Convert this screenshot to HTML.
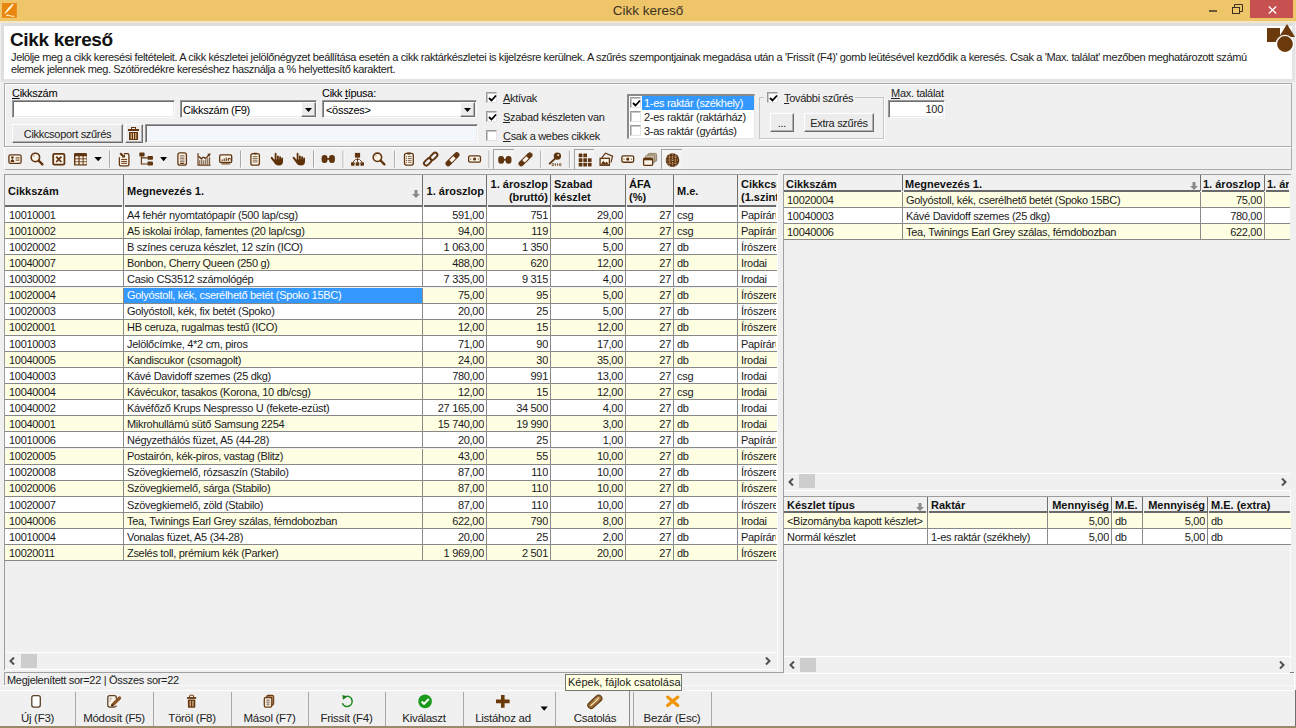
<!DOCTYPE html><html><head><meta charset="utf-8"><title>Cikk kereső</title><style>
*{box-sizing:border-box;margin:0;padding:0}
html,body{width:1296px;height:728px;overflow:hidden}
body{background:#f0f0f0;font-family:"Liberation Sans",sans-serif;font-size:11px;color:#000;position:relative;letter-spacing:-0.3px;line-height:1}
.a{position:absolute}
.t{position:absolute;white-space:nowrap}
.inp{position:absolute;background:#fff;border:1px solid #fbfbfb;border-top-color:#9a9a9a;border-left-color:#9a9a9a;box-shadow:inset 1px 1px 0 #6e6e6e,inset -1px -1px 0 #ececec}
.btn{position:absolute;background:#ececec;border:1px solid #fff;border-right-color:#6d6d6d;border-bottom-color:#6d6d6d;box-shadow:inset -1px -1px 0 #b0b0b0}
.cb{position:absolute;width:11px;height:11px;background:#fff;border:1px solid #9a9a9a;border-right-color:#e4e4e4;border-bottom-color:#e4e4e4;box-shadow:inset 1px 1px 0 #c8c8c8}
.cb svg{position:absolute;left:1px;top:1px}
.u{text-decoration:underline}
.ic{position:absolute}
.sep{position:absolute;width:1px;background:#a8a8a8;border-right:1px solid #fff;width:2px}
.hc{position:absolute;font-weight:bold;color:#111;letter-spacing:0}
.cell{position:absolute;white-space:nowrap;overflow:hidden;line-height:14px;margin-top:-2.3px}
</style></head><body>
<div class="a" style="left:0;top:0;width:1296px;height:21px;background:#efc56a"></div>
<div class="a" style="left:0;top:21px;width:1296px;height:2px;background:#f3e7c6"></div>
<svg class="a" style="left:2px;top:3px" width="15" height="15" viewBox="0 0 15 15"><rect width="14.8" height="14.8" fill="#e8860f"/><path d="M2.2 10.6 Q5 5.5 10.8 0.6 L11.6 1.4 Q8.6 6.4 3.2 10.8 Z" fill="#fff8d8"/><path d="M4.2 12.8 Q6 11.6 7.2 12.6 Q9 13.4 12.6 13.2" fill="none" stroke="#fff0c0" stroke-width="1.1"/></svg>
<div class="t" style="left:0;width:1296px;top:4px;text-align:center;font-size:13.5px;letter-spacing:0;color:#3c3220">Cikk kereső</div>
<div class="a" style="left:1209px;top:10px;width:8px;height:1.5px;background:#6a5a3a"></div>
<svg class="a" style="left:1232px;top:4px" width="11" height="10" viewBox="0 0 11 10"><rect x="0.5" y="3.5" width="7" height="6" fill="none" stroke="#3a3020"/><path d="M2.5 3.5 V0.5 H10.5 V7.5 H7.5" fill="none" stroke="#3a3020"/></svg>
<div class="a" style="left:1250px;top:0;width:43px;height:18px;background:#c75050"></div>
<svg class="a" style="left:1268px;top:6px" width="9" height="8" viewBox="0 0 9 8"><path d="M0.8 0.5 L8.2 7.5 M8.2 0.5 L0.8 7.5" stroke="#fff" stroke-width="1.4"/></svg>
<div class="a" style="left:1px;top:23px;width:1294px;height:59px;background:#fff;border:3px solid #e4e4e4;border-top-color:#dedede;border-left-color:#dedede"></div>
<div class="t" style="left:10px;top:30px;font-size:19px;font-weight:bold;letter-spacing:-0.35px;color:#111">Cikk kereső</div>
<div class="t" style="left:11px;top:52px;font-size:11px;color:#222;letter-spacing:-0.37px">Jelölje meg a cikk keresési feltételeit. A cikk készletei jelölőnégyzet beállítása esetén a cikk raktárkészletei is kijelzésre kerülnek. A szűrés szempontjainak megadása után a 'Frissít (F4)' gomb leütésével kezdődik a keresés. Csak a 'Max. találat' mezőben meghatározott számú</div>
<div class="t" style="left:11px;top:64px;font-size:11px;color:#222;letter-spacing:-0.37px">elemek jelennek meg. Szótöredékre kereséshez használja a % helyettesítő karaktert.</div>
<svg class="a" style="left:1264px;top:22px" width="32" height="30" viewBox="0 0 32 30"><rect x="3" y="6" width="13" height="14" fill="#6a3a0c"/><path d="M23 2 L31 15 L15 15 Z" fill="#6a3a0c"/><circle cx="21" cy="22" r="8.6" fill="#6a3a0c" stroke="#fff" stroke-width="1.4"/></svg>
<div class="a" style="left:4px;top:83px;width:1288px;height:64px;border:1px solid #ababab;box-shadow:1px 1px 0 #fff inset"></div>
<div class="t" style="left:12px;top:88px"><span class="u">C</span>ikkszám</div>
<div class="inp" style="left:12px;top:100px;width:163px;height:18px"></div>
<div class="inp" style="left:180px;top:100px;width:137px;height:18px"></div>
<div class="t" style="left:183px;top:105px">Cikkszám (F9)</div>
<div class="btn" style="left:301px;top:102px;width:15px;height:15px"></div>
<svg class="a" style="left:305px;top:108px" width="8" height="4"><path d="M0 0 H7 L3.5 4 Z" fill="#000"/></svg>
<div class="t" style="left:322px;top:88px">Cikk <span class="u">t</span>ípusa:</div>
<div class="inp" style="left:322px;top:100px;width:155px;height:18px"></div>
<div class="t" style="left:326px;top:105px">&lt;összes&gt;</div>
<div class="btn" style="left:460px;top:102px;width:15px;height:15px"></div>
<svg class="a" style="left:464px;top:108px" width="8" height="4"><path d="M0 0 H7 L3.5 4 Z" fill="#000"/></svg>
<div class="btn" style="left:12px;top:124px;width:111px;height:19px"></div>
<div class="t" style="left:12px;width:111px;text-align:center;top:129px;color:#222">Cikkcsoport szűrés</div>
<div class="btn" style="left:125px;top:124px;width:18px;height:19px"></div>
<svg class="a" style="left:128px;top:127px" width="11" height="13" viewBox="0 0 11 13"><rect x="3.5" y="0.5" width="4" height="2" fill="none" stroke="#603510"/><rect x="0" y="2" width="11" height="2" fill="#603510"/><path d="M1 5 H10 V13 H1 Z M3 6 V12 M5.5 6 V12 M8 6 V12" fill="#603510" stroke="#f0e0c0" stroke-width="0"/><path d="M3.2 6 V12 M5.5 6 V12 M7.8 6 V12" stroke="#e8c898" stroke-width="1"/></svg>
<div class="inp" style="left:145px;top:124px;width:333px;height:19px;background:#f3f6fb"></div>
<div class="cb" style="left:486px;top:92px"><svg width="9" height="9" viewBox="0 0 9 9"><path d="M1 4 L3.5 6.5 L8 1.5" stroke="#000" stroke-width="1.8" fill="none"/></svg></div>
<div class="t" style="left:503px;top:93px;color:#222"><span class="u">A</span>ktívak</div>
<div class="cb" style="left:486px;top:111px"><svg width="9" height="9" viewBox="0 0 9 9"><path d="M1 4 L3.5 6.5 L8 1.5" stroke="#000" stroke-width="1.8" fill="none"/></svg></div>
<div class="t" style="left:503px;top:112px;color:#222"><span class="u">S</span>zabad készleten van</div>
<div class="cb" style="left:486px;top:130px"></div>
<div class="t" style="left:503px;top:131px;color:#222"><span class="u">C</span>sak a webes cikkek</div>
<div class="a" style="left:627px;top:94px;width:128px;height:45px;background:#fff;border:1px solid #9a9a9a;border-left:2px solid #8a8a8a;border-top:2px solid #8a8a8a;border-right-color:#e6e6e6;border-bottom-color:#e6e6e6"></div>
<div class="a" style="left:642px;top:96px;width:112px;height:14px;background:#3399ff"></div>
<div class="cb" style="left:630px;top:97px"><svg width="9" height="9" viewBox="0 0 9 9"><path d="M1 4 L3.5 6.5 L8 1.5" stroke="#000" stroke-width="1.8" fill="none"/></svg></div>
<div class="t" style="left:644px;top:98px;color:#fff">1-es raktár (székhely)</div>
<div class="cb" style="left:630px;top:111px"></div>
<div class="t" style="left:644px;top:112px;color:#222">2-es raktár (raktárház)</div>
<div class="cb" style="left:630px;top:125px"></div>
<div class="t" style="left:644px;top:126px;color:#222">3-as raktár (gyártás)</div>
<div class="a" style="left:759px;top:97px;width:125px;height:42px;border:1px solid #c6c6c6;box-shadow:1px 1px 0 #fff"></div>
<div class="a" style="left:764px;top:90px;width:91px;height:14px;background:#f0f0f0"></div>
<div class="cb" style="left:767px;top:92px"><svg width="9" height="9" viewBox="0 0 9 9"><path d="M1 4 L3.5 6.5 L8 1.5" stroke="#000" stroke-width="1.8" fill="none"/></svg></div>
<div class="t" style="left:784px;top:93px;color:#222"><span class="u">T</span>ovábbi szűrés</div>
<div class="btn" style="left:770px;top:113px;width:24px;height:19px"></div>
<div class="t" style="left:770px;width:24px;text-align:center;top:118px;color:#222">...</div>
<div class="btn" style="left:804px;top:113px;width:70px;height:19px"></div>
<div class="t" style="left:804px;width:70px;text-align:center;top:118px;color:#222">Extra szűrés</div>
<div class="t" style="left:891px;top:88px;color:#222"><span class="u">M</span>ax. találat</div>
<div class="inp" style="left:888px;top:100px;width:57px;height:18px"></div>
<div class="t" style="left:888px;width:55px;text-align:right;top:104px;color:#222">100</div>
<div class="a" style="left:4px;top:147px;width:1288px;height:23px;border-top:1px solid #fff;border-left:1px solid #fff;border-right:1px solid #ababab;border-bottom:1px solid #ababab"></div>
<div class="a" style="left:493.4px;top:149px;width:20.399999999999977px;height:20px;border-top:1px solid #a4a4a4;border-left:1px solid #a4a4a4;background:#f4f4f4"></div>
<div class="a" style="left:574.3px;top:149px;width:20.100000000000023px;height:20px;border-top:1px solid #a4a4a4;border-left:1px solid #a4a4a4;background:#f4f4f4"></div>
<div class="a" style="left:661.3px;top:149px;width:20.600000000000023px;height:20px;border-top:1px solid #a4a4a4;border-left:1px solid #a4a4a4;background:#f4f4f4"></div>
<svg class="ic" style="left:0;top:145px" width="700" height="30" viewBox="0 145 700 30"><rect x="109.0" y="150.6" width="1" height="17" fill="#a8a8a8"/><rect x="110.0" y="150.6" width="1" height="17" fill="#fafafa"/><rect x="240.0" y="150.6" width="1" height="17" fill="#a8a8a8"/><rect x="241.0" y="150.6" width="1" height="17" fill="#fafafa"/><rect x="313.0" y="150.6" width="1" height="17" fill="#a8a8a8"/><rect x="314.0" y="150.6" width="1" height="17" fill="#fafafa"/><rect x="342.5" y="150.6" width="1" height="17" fill="#a8a8a8"/><rect x="343.5" y="150.6" width="1" height="17" fill="#fafafa"/><rect x="394.1" y="150.6" width="1" height="17" fill="#a8a8a8"/><rect x="395.1" y="150.6" width="1" height="17" fill="#fafafa"/><rect x="488.5" y="150.6" width="1" height="17" fill="#a8a8a8"/><rect x="489.5" y="150.6" width="1" height="17" fill="#fafafa"/><rect x="540.2" y="150.6" width="1" height="17" fill="#a8a8a8"/><rect x="541.2" y="150.6" width="1" height="17" fill="#fafafa"/><rect x="568.9" y="150.6" width="1" height="17" fill="#a8a8a8"/><rect x="569.9" y="150.6" width="1" height="17" fill="#fafafa"/><rect x="8.9" y="154.9" width="12.2" height="8.4" rx="1.6" fill="#fdf6ea" stroke="#603510" stroke-width="1.3"/><circle cx="12.4" cy="157.6" r="1.3" fill="#603510"/><path d="M10.4 161.9 Q10.6 159.2 12.4 159.2 Q14.2 159.2 14.4 161.9 Z" fill="#603510"/><path d="M15.6 157.9 H19.6 M15.6 160.1 H19.6" stroke="#603510" stroke-width="1"/><circle cx="35.4" cy="157.4" r="4.2" fill="#fdf6ea" stroke="#603510" stroke-width="1.6"/><path d="M38.6 160.6 L42.4 164.4" stroke="#603510" stroke-width="2.4" stroke-linecap="round"/><circle cx="33.9" cy="155.9" r="0.7" fill="#9a8a7a"/><rect x="53.2" y="153.8" width="11.2" height="10.9" rx="1.2" fill="#fdf6ea" stroke="#603510" stroke-width="1.8"/><path d="M56.2 156.6 L61.4 162 M61.4 156.6 L56.2 162" stroke="#603510" stroke-width="1.8"/><rect x="74" y="153" width="13" height="12.6" rx="1.2" fill="#603510"/><rect x="75.4" y="156.3" width="3" height="2.1" fill="#fdf6ea"/><rect x="79.6" y="156.3" width="3" height="2.1" fill="#fdf6ea"/><rect x="83.6" y="156.3" width="3" height="2.1" fill="#fdf6ea"/><rect x="75.4" y="159.3" width="3" height="2.1" fill="#fdf6ea"/><rect x="79.6" y="159.3" width="3" height="2.1" fill="#fdf6ea"/><rect x="83.6" y="159.3" width="3" height="2.1" fill="#fdf6ea"/><rect x="75.4" y="162.2" width="3" height="2.1" fill="#fdf6ea"/><rect x="79.6" y="162.2" width="3" height="2.1" fill="#fdf6ea"/><rect x="83.6" y="162.2" width="3" height="2.1" fill="#fdf6ea"/><path d="M94.4 157 H101.9 L98.15 161.2 Z" fill="#000"/><path d="M123.8 153.6 H127.6 Q128.9 153.6 128.9 154.9 V164.5 Q128.9 165.8 127.6 165.8 H120.7 Q119.4 165.8 119.4 164.5 V157.3" fill="#fdf6ea" stroke="#603510" stroke-width="1.3"/><path d="M121.2 159.4 H127.1 M121.2 161.4 H127.1 M121.2 163.3 H127.1" stroke="#603510" stroke-width="1"/><path d="M120.2 153.2 L123.2 156.2" stroke="#603510" stroke-width="2.2"/><path d="M121.6 157.6 L125 157.6 L125 154.2 Z" fill="#603510"/><rect x="139.3" y="152.6" width="5.3" height="4" rx="1" fill="#603510"/><rect x="147.4" y="155.9" width="5.6" height="3.9" rx="1" fill="#603510"/><rect x="147.4" y="161.4" width="5.6" height="4.2" rx="1" fill="#603510"/><path d="M141.4 156.6 V164 H147.4 M141.4 157.9 H147.4" fill="none" stroke="#603510" stroke-width="1.1"/><path d="M160.1 157 H167.1 L163.6 161.2 Z" fill="#000"/><rect x="177.9" y="152.9" width="8.5" height="12.3" rx="2" fill="#fdf6ea" stroke="#603510" stroke-width="1.3"/><path d="M179.9 155.6 H184.5 M179.9 157.1 H184.5 M179.9 158.6 H184.5 M179.9 160.1 H184.5 M179.9 161.6 H184.5" stroke="#8a7262" stroke-width="0.9"/><path d="M180.6 163.4 H183.8" stroke="#603510" stroke-width="1.3" stroke-linecap="round"/><path d="M198 153 V165.2 H210.6" fill="none" stroke="#603510" stroke-width="1.1"/><path d="M199.8 165 V160.2 M201.8 165 V159.2 M203.8 165 V160.4 M205.8 165 V159.4 M207.8 165 V158.2 M209.6 165 V157.2" stroke="#603510" stroke-width="0.9"/><path d="M198.4 156.2 L201.2 158.6 L203.4 157.2 L205.6 158.4 L209 155" fill="none" stroke="#603510" stroke-width="1.4"/><path d="M210.6 153.2 L207.2 154 L209.8 156.6 Z" fill="#603510"/><rect x="219.7" y="154.9" width="12" height="7.6" rx="1.2" fill="#fdf6ea" stroke="#603510" stroke-width="1.3"/><path d="M222.2 161 V159.6 M224.2 161 V158.6 M226.2 161 V157.4" stroke="#603510" stroke-width="1.1"/><circle cx="229.2" cy="159.4" r="1.7" fill="#603510"/><circle cx="229.6" cy="159.9" r="1" fill="#fdf6ea"/><path d="M221.6 163.9 H229.8" stroke="#8a6a4a" stroke-width="1.4"/><rect x="250.9" y="153.6" width="8.5" height="11.6" rx="2" fill="#fdf6ea" stroke="#603510" stroke-width="1.3"/><rect x="253.20000000000002" y="152.7" width="4" height="1.9" rx="0.8" fill="#603510"/><path d="M252.60000000000002 156.6 H257.6 M252.60000000000002 158.4 H257.6 M252.60000000000002 160.2 H257.6 M252.60000000000002 162 H257.6" stroke="#7a5a40" stroke-width="0.9"/><g transform="translate(0 0)"><path d="M271.7 157.8 L274.6 161.6" stroke="#5e3008" stroke-width="2" stroke-linecap="round"/><path d="M275.6 153.7 V160.5 M277.9 156.3 V160.5 M280.1 157.1 V160.5 M282.1 158.3 V160.5" stroke="#5e3008" stroke-width="1.8" stroke-linecap="round"/><path d="M274.3 159.6 H283 V161.8 Q283 165.5 278.8 165.5 Q275.9 165.5 274.4 163.2 Z" fill="#5e3008"/></g><g transform="translate(22 0)"><path d="M271.7 157.8 L274.6 161.6" stroke="#5e3008" stroke-width="2" stroke-linecap="round"/><path d="M275.6 153.7 V160.5 M277.9 156.3 V160.5 M280.1 157.1 V160.5 M282.1 158.3 V160.5" stroke="#5e3008" stroke-width="1.8" stroke-linecap="round"/><path d="M274.3 159.6 H283 V161.8 Q283 165.5 278.8 165.5 Q275.9 165.5 274.4 163.2 Z" fill="#5e3008"/></g><rect x="321.6" y="155" width="5.9" height="7.9" rx="2.7" ry="3.2" fill="#603510"/><rect x="329.0" y="155" width="5.9" height="7.9" rx="2.7" ry="3.2" fill="#603510"/><rect x="327.1" y="158" width="2.4" height="1.8" fill="#603510"/><rect x="354.9" y="152.9" width="5.2" height="4.7" fill="#603510"/><rect x="351" y="162.2" width="3.6" height="3.5" rx="0.6" fill="#603510"/><rect x="355.7" y="162.2" width="3.6" height="3.5" rx="0.6" fill="#603510"/><rect x="360.4" y="162.2" width="3.6" height="3.5" rx="0.6" fill="#603510"/><path d="M357.5 157.5 V162.2 M352.8 162.2 L355.6 159.4 H359.4 L362.2 162.2" fill="none" stroke="#603510" stroke-width="0.9"/><circle cx="377.4" cy="157.3" r="4.2" fill="#fdf6ea" stroke="#603510" stroke-width="1.6"/><path d="M380.59999999999997 160.5 L384.4 164.3" stroke="#603510" stroke-width="2.4" stroke-linecap="round"/><circle cx="375.9" cy="155.8" r="0.7" fill="#9a8a7a"/><rect x="404.5" y="153.4" width="8.8" height="11.7" rx="2" fill="#fdf6ea" stroke="#603510" stroke-width="1.3"/><rect x="406.9" y="152.6" width="4" height="1.9" rx="0.8" fill="#603510"/><path d="M407.9 156.6 H411.6 M407.9 158.5 H411.6 M407.9 160.4 H411.6 M407.9 162.3 H411.6" stroke="#7a5a40" stroke-width="0.9"/><circle cx="406.4" cy="156.6" r="0.55" fill="#603510"/><circle cx="406.4" cy="158.5" r="0.55" fill="#603510"/><circle cx="406.4" cy="160.4" r="0.55" fill="#603510"/><circle cx="406.4" cy="162.3" r="0.55" fill="#603510"/><rect x="423.4" y="159.6" width="8.6" height="4.6" rx="2.3" transform="rotate(-45 427.7 161.9)" fill="none" stroke="#603510" stroke-width="1.9"/><rect x="429.4" y="154" width="8.6" height="4.6" rx="2.3" transform="rotate(-45 433.7 156.3)" fill="none" stroke="#603510" stroke-width="1.9"/><g transform="rotate(-45 452.5 159.2)"><rect x="443.7" y="156.5" width="17.6" height="5.4" rx="2.7" fill="#603510"/><rect x="449.7" y="157.5" width="5.6" height="3.4" fill="#fdf6ea"/></g><rect x="468.65" y="155.85" width="11.8" height="6.3" rx="1.4" fill="#fdf6ea" stroke="#603510" stroke-width="1.3"/><circle cx="474.55" cy="159.0" r="1.6" fill="#603510"/><circle cx="470.8" cy="159.0" r="0.6" fill="#603510"/><circle cx="478.3" cy="159.0" r="0.6" fill="#603510"/><rect x="498.2" y="155.9" width="5.9" height="7.9" rx="2.7" ry="3.2" fill="#603510"/><rect x="505.59999999999997" y="155.9" width="5.9" height="7.9" rx="2.7" ry="3.2" fill="#603510"/><rect x="503.7" y="158.9" width="2.4" height="1.8" fill="#603510"/><g transform="rotate(-45 525.5 159.4)"><rect x="516.7" y="156.70000000000002" width="17.6" height="5.4" rx="2.7" fill="#603510"/><rect x="522.7" y="157.70000000000002" width="5.6" height="3.4" fill="#fdf6ea"/></g><circle cx="557.4" cy="156.1" r="3.7" fill="#603510"/><circle cx="558.3" cy="155.2" r="0.9" fill="#fdf6ea"/><path d="M555 158.6 L549.6 163.6" stroke="#603510" stroke-width="1.9" stroke-linecap="round"/><ellipse cx="552.9" cy="164.6" rx="0.9" ry="1.2" fill="none" stroke="#603510" stroke-width="0.8"/><path d="M555.4 163.4 V165.8 M557.6 163.4 V165.8" stroke="#603510" stroke-width="0.9"/><ellipse cx="560.2" cy="164.6" rx="0.9" ry="1.2" fill="none" stroke="#603510" stroke-width="0.8"/><rect x="578.7" y="153.6" width="3.7" height="3.7" rx="0.4" fill="#603510"/><rect x="583.3" y="153.6" width="3.7" height="3.7" rx="0.4" fill="#603510"/><rect x="578.7" y="158.2" width="3.7" height="3.7" rx="0.4" fill="#603510"/><rect x="583.3" y="158.2" width="3.7" height="3.7" rx="0.4" fill="#603510"/><rect x="587.9" y="158.2" width="3.7" height="3.7" rx="0.4" fill="#603510"/><rect x="578.7" y="162.8" width="3.7" height="3.7" rx="0.4" fill="#603510"/><rect x="583.3" y="162.8" width="3.7" height="3.7" rx="0.4" fill="#603510"/><rect x="587.9" y="162.8" width="3.7" height="3.7" rx="0.4" fill="#603510"/><path d="M601.8 157.8 L605.4 153.2 L612.6 156.2 L611 162.4" fill="none" stroke="#603510" stroke-width="1.2"/><rect x="600.1" y="158.3" width="9.3" height="7" fill="#fdf6ea" stroke="#603510" stroke-width="1.3"/><path d="M600.6 164.8 L603.2 160.8 L605.2 163 L606.6 161.6 L609 164.8 Z" fill="#603510"/><rect x="621.85" y="155.95000000000002" width="11.8" height="6.3" rx="1.4" fill="#fdf6ea" stroke="#603510" stroke-width="1.3"/><circle cx="627.75" cy="159.10000000000002" r="1.6" fill="#603510"/><circle cx="624.0" cy="159.10000000000002" r="0.6" fill="#603510"/><circle cx="631.5" cy="159.10000000000002" r="0.6" fill="#603510"/><rect x="648" y="153.4" width="8.6" height="8" rx="1.2" fill="#b8a892" stroke="#8a7a62" stroke-width="0.9"/><rect x="645.7" y="155.2" width="8.6" height="8" rx="1.2" fill="#cfc2ac" stroke="#8a7a62" stroke-width="0.9"/><rect x="643.6" y="158.1" width="9" height="7.3" rx="1.2" fill="#fdf6ea" stroke="#603510" stroke-width="1.3"/><rect x="643.6" y="158.1" width="9" height="2.2" fill="#603510"/><circle cx="672.5" cy="160.1" r="6.8" fill="#603510"/><path d="M667.4 157.1 H677.6 M666.4 160.1 H678.6 M667.4 163.1 H677.6 M669.5 154.4 V165.8 M672.5 153.6 V166.6 M675.5 154.4 V165.8" stroke="#d8b890" stroke-width="0.8" stroke-dasharray="1.1 1"/></svg>
<div class="a" style="left:4px;top:174px;width:774px;height:496px;background:#f0f0f0;border-left:1px solid #9c9c9c;border-top:1px solid #9c9c9c"></div>
<div class="a" style="left:5px;top:175px;width:772px;height:31px;background:#f0f0f0"></div>
<div class="a" style="left:5px;top:205px;width:117px;height:2px;background:#6a6a6a"></div>
<div class="hc t" style="left:8px;top:185px;line-height:13px;width:116px;overflow:hidden">Cikkszám</div>
<div class="a" style="left:123px;top:175px;width:1px;height:32px;background:#6e6e6e"></div>
<div class="a" style="left:125px;top:205px;width:297px;height:2px;background:#6a6a6a"></div>
<div class="hc t" style="left:127px;top:185px;line-height:13px;width:296px;overflow:hidden">Megnevezés 1.</div>
<div class="a" style="left:422px;top:175px;width:1px;height:32px;background:#6e6e6e"></div>
<div class="a" style="left:424px;top:205px;width:62px;height:2px;background:#6a6a6a"></div>
<div class="hc t" style="left:423px;width:61px;text-align:right;top:185px;line-height:13px">1. ároszlop</div>
<div class="a" style="left:486px;top:175px;width:1px;height:32px;background:#6e6e6e"></div>
<div class="a" style="left:488px;top:205px;width:62px;height:2px;background:#6a6a6a"></div>
<div class="hc t" style="left:487px;width:61px;text-align:right;top:178px;line-height:13px">1. ároszlop<br>(bruttó)</div>
<div class="a" style="left:550px;top:175px;width:1px;height:32px;background:#6e6e6e"></div>
<div class="a" style="left:552px;top:205px;width:73px;height:2px;background:#6a6a6a"></div>
<div class="hc t" style="left:554px;top:178px;line-height:13px;width:72px;overflow:hidden">Szabad<br>készlet</div>
<div class="a" style="left:625px;top:175px;width:1px;height:32px;background:#6e6e6e"></div>
<div class="a" style="left:627px;top:205px;width:46px;height:2px;background:#6a6a6a"></div>
<div class="hc t" style="left:629px;top:178px;line-height:13px;width:45px;overflow:hidden">ÁFA<br>(%)</div>
<div class="a" style="left:673px;top:175px;width:1px;height:32px;background:#6e6e6e"></div>
<div class="a" style="left:675px;top:205px;width:62px;height:2px;background:#6a6a6a"></div>
<div class="hc t" style="left:677px;top:185px;line-height:13px;width:61px;overflow:hidden">M.e.</div>
<div class="a" style="left:737px;top:175px;width:1px;height:32px;background:#6e6e6e"></div>
<div class="a" style="left:739px;top:205px;width:37px;height:2px;background:#6a6a6a"></div>
<div class="hc t" style="left:741px;top:178px;line-height:13px;width:36px;overflow:hidden">Cikkcso<br>(1.szint</div>
<svg class="ic" style="left:412px;top:190px" width="8" height="8" viewBox="0 0 8 8"><path d="M2.5 0H5.5V4H8L4 8L0 4H2.5Z" fill="#8a8a8a"/></svg>
<div class="a" style="left:5px;top:207.0px;width:772px;height:16px;background:#ffffff;border-bottom:1px solid #888"></div>
<div class="cell" style="left:9px;width:114px;top:210.0px;color:#1a1a1a">10010001</div>
<div class="a" style="left:123px;top:207.0px;width:1px;height:16px;background:#8a8a8a"></div>
<div class="cell" style="left:127px;width:295px;top:210.0px;color:#1a1a1a">A4 fehér nyomtatópapír (500 lap/csg)</div>
<div class="a" style="left:422px;top:207.0px;width:1px;height:16px;background:#8a8a8a"></div>
<div class="cell" style="left:423px;width:61px;text-align:right;top:210.0px;color:#1a1a1a">591,00</div>
<div class="a" style="left:486px;top:207.0px;width:1px;height:16px;background:#8a8a8a"></div>
<div class="cell" style="left:487px;width:61px;text-align:right;top:210.0px;color:#1a1a1a">751</div>
<div class="a" style="left:550px;top:207.0px;width:1px;height:16px;background:#8a8a8a"></div>
<div class="cell" style="left:551px;width:72px;text-align:right;top:210.0px;color:#1a1a1a">29,00</div>
<div class="a" style="left:625px;top:207.0px;width:1px;height:16px;background:#8a8a8a"></div>
<div class="cell" style="left:626px;width:45px;text-align:right;top:210.0px;color:#1a1a1a">27</div>
<div class="a" style="left:673px;top:207.0px;width:1px;height:16px;background:#8a8a8a"></div>
<div class="cell" style="left:677px;width:60px;top:210.0px;color:#1a1a1a">csg</div>
<div class="a" style="left:737px;top:207.0px;width:1px;height:16px;background:#8a8a8a"></div>
<div class="cell" style="left:741px;width:35px;top:210.0px;color:#1a1a1a">Papíráru</div>
<div class="a" style="left:5px;top:223.1px;width:772px;height:16px;background:#fefee2;border-bottom:1px solid #888"></div>
<div class="cell" style="left:9px;width:114px;top:226.1px;color:#1a1a1a">10010002</div>
<div class="a" style="left:123px;top:223.1px;width:1px;height:16px;background:#8a8a8a"></div>
<div class="cell" style="left:127px;width:295px;top:226.1px;color:#1a1a1a">A5 iskolai írólap, famentes (20 lap/csg)</div>
<div class="a" style="left:422px;top:223.1px;width:1px;height:16px;background:#8a8a8a"></div>
<div class="cell" style="left:423px;width:61px;text-align:right;top:226.1px;color:#1a1a1a">94,00</div>
<div class="a" style="left:486px;top:223.1px;width:1px;height:16px;background:#8a8a8a"></div>
<div class="cell" style="left:487px;width:61px;text-align:right;top:226.1px;color:#1a1a1a">119</div>
<div class="a" style="left:550px;top:223.1px;width:1px;height:16px;background:#8a8a8a"></div>
<div class="cell" style="left:551px;width:72px;text-align:right;top:226.1px;color:#1a1a1a">4,00</div>
<div class="a" style="left:625px;top:223.1px;width:1px;height:16px;background:#8a8a8a"></div>
<div class="cell" style="left:626px;width:45px;text-align:right;top:226.1px;color:#1a1a1a">27</div>
<div class="a" style="left:673px;top:223.1px;width:1px;height:16px;background:#8a8a8a"></div>
<div class="cell" style="left:677px;width:60px;top:226.1px;color:#1a1a1a">csg</div>
<div class="a" style="left:737px;top:223.1px;width:1px;height:16px;background:#8a8a8a"></div>
<div class="cell" style="left:741px;width:35px;top:226.1px;color:#1a1a1a">Papíráru</div>
<div class="a" style="left:5px;top:239.2px;width:772px;height:16px;background:#ffffff;border-bottom:1px solid #888"></div>
<div class="cell" style="left:9px;width:114px;top:242.2px;color:#1a1a1a">10020002</div>
<div class="a" style="left:123px;top:239.2px;width:1px;height:16px;background:#8a8a8a"></div>
<div class="cell" style="left:127px;width:295px;top:242.2px;color:#1a1a1a">B színes ceruza készlet, 12 szín (ICO)</div>
<div class="a" style="left:422px;top:239.2px;width:1px;height:16px;background:#8a8a8a"></div>
<div class="cell" style="left:423px;width:61px;text-align:right;top:242.2px;color:#1a1a1a">1 063,00</div>
<div class="a" style="left:486px;top:239.2px;width:1px;height:16px;background:#8a8a8a"></div>
<div class="cell" style="left:487px;width:61px;text-align:right;top:242.2px;color:#1a1a1a">1 350</div>
<div class="a" style="left:550px;top:239.2px;width:1px;height:16px;background:#8a8a8a"></div>
<div class="cell" style="left:551px;width:72px;text-align:right;top:242.2px;color:#1a1a1a">5,00</div>
<div class="a" style="left:625px;top:239.2px;width:1px;height:16px;background:#8a8a8a"></div>
<div class="cell" style="left:626px;width:45px;text-align:right;top:242.2px;color:#1a1a1a">27</div>
<div class="a" style="left:673px;top:239.2px;width:1px;height:16px;background:#8a8a8a"></div>
<div class="cell" style="left:677px;width:60px;top:242.2px;color:#1a1a1a">db</div>
<div class="a" style="left:737px;top:239.2px;width:1px;height:16px;background:#8a8a8a"></div>
<div class="cell" style="left:741px;width:35px;top:242.2px;color:#1a1a1a">Írószere</div>
<div class="a" style="left:5px;top:255.3px;width:772px;height:16px;background:#fefee2;border-bottom:1px solid #888"></div>
<div class="cell" style="left:9px;width:114px;top:258.3px;color:#1a1a1a">10040007</div>
<div class="a" style="left:123px;top:255.3px;width:1px;height:16px;background:#8a8a8a"></div>
<div class="cell" style="left:127px;width:295px;top:258.3px;color:#1a1a1a">Bonbon, Cherry Queen (250 g)</div>
<div class="a" style="left:422px;top:255.3px;width:1px;height:16px;background:#8a8a8a"></div>
<div class="cell" style="left:423px;width:61px;text-align:right;top:258.3px;color:#1a1a1a">488,00</div>
<div class="a" style="left:486px;top:255.3px;width:1px;height:16px;background:#8a8a8a"></div>
<div class="cell" style="left:487px;width:61px;text-align:right;top:258.3px;color:#1a1a1a">620</div>
<div class="a" style="left:550px;top:255.3px;width:1px;height:16px;background:#8a8a8a"></div>
<div class="cell" style="left:551px;width:72px;text-align:right;top:258.3px;color:#1a1a1a">12,00</div>
<div class="a" style="left:625px;top:255.3px;width:1px;height:16px;background:#8a8a8a"></div>
<div class="cell" style="left:626px;width:45px;text-align:right;top:258.3px;color:#1a1a1a">27</div>
<div class="a" style="left:673px;top:255.3px;width:1px;height:16px;background:#8a8a8a"></div>
<div class="cell" style="left:677px;width:60px;top:258.3px;color:#1a1a1a">db</div>
<div class="a" style="left:737px;top:255.3px;width:1px;height:16px;background:#8a8a8a"></div>
<div class="cell" style="left:741px;width:35px;top:258.3px;color:#1a1a1a">Irodai</div>
<div class="a" style="left:5px;top:271.4px;width:772px;height:16px;background:#ffffff;border-bottom:1px solid #888"></div>
<div class="cell" style="left:9px;width:114px;top:274.4px;color:#1a1a1a">10030002</div>
<div class="a" style="left:123px;top:271.4px;width:1px;height:16px;background:#8a8a8a"></div>
<div class="cell" style="left:127px;width:295px;top:274.4px;color:#1a1a1a">Casio CS3512 számológép</div>
<div class="a" style="left:422px;top:271.4px;width:1px;height:16px;background:#8a8a8a"></div>
<div class="cell" style="left:423px;width:61px;text-align:right;top:274.4px;color:#1a1a1a">7 335,00</div>
<div class="a" style="left:486px;top:271.4px;width:1px;height:16px;background:#8a8a8a"></div>
<div class="cell" style="left:487px;width:61px;text-align:right;top:274.4px;color:#1a1a1a">9 315</div>
<div class="a" style="left:550px;top:271.4px;width:1px;height:16px;background:#8a8a8a"></div>
<div class="cell" style="left:551px;width:72px;text-align:right;top:274.4px;color:#1a1a1a">4,00</div>
<div class="a" style="left:625px;top:271.4px;width:1px;height:16px;background:#8a8a8a"></div>
<div class="cell" style="left:626px;width:45px;text-align:right;top:274.4px;color:#1a1a1a">27</div>
<div class="a" style="left:673px;top:271.4px;width:1px;height:16px;background:#8a8a8a"></div>
<div class="cell" style="left:677px;width:60px;top:274.4px;color:#1a1a1a">db</div>
<div class="a" style="left:737px;top:271.4px;width:1px;height:16px;background:#8a8a8a"></div>
<div class="cell" style="left:741px;width:35px;top:274.4px;color:#1a1a1a">Irodai</div>
<div class="a" style="left:5px;top:287.5px;width:772px;height:16px;background:#fefee2;border-bottom:1px solid #888"></div>
<div class="cell" style="left:9px;width:114px;top:290.5px;color:#1a1a1a">10020004</div>
<div class="a" style="left:123px;top:287.5px;width:1px;height:16px;background:#8a8a8a"></div>
<div class="a" style="left:124px;top:287.5px;width:298px;height:15px;background:#3399ff"></div>
<div class="cell" style="left:127px;width:295px;top:290.5px;color:#fff">Golyóstoll, kék, cserélhető betét (Spoko 15BC)</div>
<div class="a" style="left:422px;top:287.5px;width:1px;height:16px;background:#8a8a8a"></div>
<div class="cell" style="left:423px;width:61px;text-align:right;top:290.5px;color:#1a1a1a">75,00</div>
<div class="a" style="left:486px;top:287.5px;width:1px;height:16px;background:#8a8a8a"></div>
<div class="cell" style="left:487px;width:61px;text-align:right;top:290.5px;color:#1a1a1a">95</div>
<div class="a" style="left:550px;top:287.5px;width:1px;height:16px;background:#8a8a8a"></div>
<div class="cell" style="left:551px;width:72px;text-align:right;top:290.5px;color:#1a1a1a">5,00</div>
<div class="a" style="left:625px;top:287.5px;width:1px;height:16px;background:#8a8a8a"></div>
<div class="cell" style="left:626px;width:45px;text-align:right;top:290.5px;color:#1a1a1a">27</div>
<div class="a" style="left:673px;top:287.5px;width:1px;height:16px;background:#8a8a8a"></div>
<div class="cell" style="left:677px;width:60px;top:290.5px;color:#1a1a1a">db</div>
<div class="a" style="left:737px;top:287.5px;width:1px;height:16px;background:#8a8a8a"></div>
<div class="cell" style="left:741px;width:35px;top:290.5px;color:#1a1a1a">Írószere</div>
<div class="a" style="left:5px;top:303.6px;width:772px;height:16px;background:#ffffff;border-bottom:1px solid #888"></div>
<div class="cell" style="left:9px;width:114px;top:306.6px;color:#1a1a1a">10020003</div>
<div class="a" style="left:123px;top:303.6px;width:1px;height:16px;background:#8a8a8a"></div>
<div class="cell" style="left:127px;width:295px;top:306.6px;color:#1a1a1a">Golyóstoll, kék, fix betét (Spoko)</div>
<div class="a" style="left:422px;top:303.6px;width:1px;height:16px;background:#8a8a8a"></div>
<div class="cell" style="left:423px;width:61px;text-align:right;top:306.6px;color:#1a1a1a">20,00</div>
<div class="a" style="left:486px;top:303.6px;width:1px;height:16px;background:#8a8a8a"></div>
<div class="cell" style="left:487px;width:61px;text-align:right;top:306.6px;color:#1a1a1a">25</div>
<div class="a" style="left:550px;top:303.6px;width:1px;height:16px;background:#8a8a8a"></div>
<div class="cell" style="left:551px;width:72px;text-align:right;top:306.6px;color:#1a1a1a">5,00</div>
<div class="a" style="left:625px;top:303.6px;width:1px;height:16px;background:#8a8a8a"></div>
<div class="cell" style="left:626px;width:45px;text-align:right;top:306.6px;color:#1a1a1a">27</div>
<div class="a" style="left:673px;top:303.6px;width:1px;height:16px;background:#8a8a8a"></div>
<div class="cell" style="left:677px;width:60px;top:306.6px;color:#1a1a1a">db</div>
<div class="a" style="left:737px;top:303.6px;width:1px;height:16px;background:#8a8a8a"></div>
<div class="cell" style="left:741px;width:35px;top:306.6px;color:#1a1a1a">Írószere</div>
<div class="a" style="left:5px;top:319.7px;width:772px;height:16px;background:#fefee2;border-bottom:1px solid #888"></div>
<div class="cell" style="left:9px;width:114px;top:322.7px;color:#1a1a1a">10020001</div>
<div class="a" style="left:123px;top:319.7px;width:1px;height:16px;background:#8a8a8a"></div>
<div class="cell" style="left:127px;width:295px;top:322.7px;color:#1a1a1a">HB ceruza, rugalmas testű (ICO)</div>
<div class="a" style="left:422px;top:319.7px;width:1px;height:16px;background:#8a8a8a"></div>
<div class="cell" style="left:423px;width:61px;text-align:right;top:322.7px;color:#1a1a1a">12,00</div>
<div class="a" style="left:486px;top:319.7px;width:1px;height:16px;background:#8a8a8a"></div>
<div class="cell" style="left:487px;width:61px;text-align:right;top:322.7px;color:#1a1a1a">15</div>
<div class="a" style="left:550px;top:319.7px;width:1px;height:16px;background:#8a8a8a"></div>
<div class="cell" style="left:551px;width:72px;text-align:right;top:322.7px;color:#1a1a1a">12,00</div>
<div class="a" style="left:625px;top:319.7px;width:1px;height:16px;background:#8a8a8a"></div>
<div class="cell" style="left:626px;width:45px;text-align:right;top:322.7px;color:#1a1a1a">27</div>
<div class="a" style="left:673px;top:319.7px;width:1px;height:16px;background:#8a8a8a"></div>
<div class="cell" style="left:677px;width:60px;top:322.7px;color:#1a1a1a">db</div>
<div class="a" style="left:737px;top:319.7px;width:1px;height:16px;background:#8a8a8a"></div>
<div class="cell" style="left:741px;width:35px;top:322.7px;color:#1a1a1a">Írószere</div>
<div class="a" style="left:5px;top:335.8px;width:772px;height:16px;background:#ffffff;border-bottom:1px solid #888"></div>
<div class="cell" style="left:9px;width:114px;top:338.8px;color:#1a1a1a">10010003</div>
<div class="a" style="left:123px;top:335.8px;width:1px;height:16px;background:#8a8a8a"></div>
<div class="cell" style="left:127px;width:295px;top:338.8px;color:#1a1a1a">Jelölőcímke, 4*2 cm, piros</div>
<div class="a" style="left:422px;top:335.8px;width:1px;height:16px;background:#8a8a8a"></div>
<div class="cell" style="left:423px;width:61px;text-align:right;top:338.8px;color:#1a1a1a">71,00</div>
<div class="a" style="left:486px;top:335.8px;width:1px;height:16px;background:#8a8a8a"></div>
<div class="cell" style="left:487px;width:61px;text-align:right;top:338.8px;color:#1a1a1a">90</div>
<div class="a" style="left:550px;top:335.8px;width:1px;height:16px;background:#8a8a8a"></div>
<div class="cell" style="left:551px;width:72px;text-align:right;top:338.8px;color:#1a1a1a">17,00</div>
<div class="a" style="left:625px;top:335.8px;width:1px;height:16px;background:#8a8a8a"></div>
<div class="cell" style="left:626px;width:45px;text-align:right;top:338.8px;color:#1a1a1a">27</div>
<div class="a" style="left:673px;top:335.8px;width:1px;height:16px;background:#8a8a8a"></div>
<div class="cell" style="left:677px;width:60px;top:338.8px;color:#1a1a1a">db</div>
<div class="a" style="left:737px;top:335.8px;width:1px;height:16px;background:#8a8a8a"></div>
<div class="cell" style="left:741px;width:35px;top:338.8px;color:#1a1a1a">Papíráru</div>
<div class="a" style="left:5px;top:351.9px;width:772px;height:16px;background:#fefee2;border-bottom:1px solid #888"></div>
<div class="cell" style="left:9px;width:114px;top:354.9px;color:#1a1a1a">10040005</div>
<div class="a" style="left:123px;top:351.9px;width:1px;height:16px;background:#8a8a8a"></div>
<div class="cell" style="left:127px;width:295px;top:354.9px;color:#1a1a1a">Kandiscukor (csomagolt)</div>
<div class="a" style="left:422px;top:351.9px;width:1px;height:16px;background:#8a8a8a"></div>
<div class="cell" style="left:423px;width:61px;text-align:right;top:354.9px;color:#1a1a1a">24,00</div>
<div class="a" style="left:486px;top:351.9px;width:1px;height:16px;background:#8a8a8a"></div>
<div class="cell" style="left:487px;width:61px;text-align:right;top:354.9px;color:#1a1a1a">30</div>
<div class="a" style="left:550px;top:351.9px;width:1px;height:16px;background:#8a8a8a"></div>
<div class="cell" style="left:551px;width:72px;text-align:right;top:354.9px;color:#1a1a1a">35,00</div>
<div class="a" style="left:625px;top:351.9px;width:1px;height:16px;background:#8a8a8a"></div>
<div class="cell" style="left:626px;width:45px;text-align:right;top:354.9px;color:#1a1a1a">27</div>
<div class="a" style="left:673px;top:351.9px;width:1px;height:16px;background:#8a8a8a"></div>
<div class="cell" style="left:677px;width:60px;top:354.9px;color:#1a1a1a">db</div>
<div class="a" style="left:737px;top:351.9px;width:1px;height:16px;background:#8a8a8a"></div>
<div class="cell" style="left:741px;width:35px;top:354.9px;color:#1a1a1a">Irodai</div>
<div class="a" style="left:5px;top:368.0px;width:772px;height:16px;background:#ffffff;border-bottom:1px solid #888"></div>
<div class="cell" style="left:9px;width:114px;top:371.0px;color:#1a1a1a">10040003</div>
<div class="a" style="left:123px;top:368.0px;width:1px;height:16px;background:#8a8a8a"></div>
<div class="cell" style="left:127px;width:295px;top:371.0px;color:#1a1a1a">Kávé Davidoff szemes (25 dkg)</div>
<div class="a" style="left:422px;top:368.0px;width:1px;height:16px;background:#8a8a8a"></div>
<div class="cell" style="left:423px;width:61px;text-align:right;top:371.0px;color:#1a1a1a">780,00</div>
<div class="a" style="left:486px;top:368.0px;width:1px;height:16px;background:#8a8a8a"></div>
<div class="cell" style="left:487px;width:61px;text-align:right;top:371.0px;color:#1a1a1a">991</div>
<div class="a" style="left:550px;top:368.0px;width:1px;height:16px;background:#8a8a8a"></div>
<div class="cell" style="left:551px;width:72px;text-align:right;top:371.0px;color:#1a1a1a">13,00</div>
<div class="a" style="left:625px;top:368.0px;width:1px;height:16px;background:#8a8a8a"></div>
<div class="cell" style="left:626px;width:45px;text-align:right;top:371.0px;color:#1a1a1a">27</div>
<div class="a" style="left:673px;top:368.0px;width:1px;height:16px;background:#8a8a8a"></div>
<div class="cell" style="left:677px;width:60px;top:371.0px;color:#1a1a1a">csg</div>
<div class="a" style="left:737px;top:368.0px;width:1px;height:16px;background:#8a8a8a"></div>
<div class="cell" style="left:741px;width:35px;top:371.0px;color:#1a1a1a">Irodai</div>
<div class="a" style="left:5px;top:384.1px;width:772px;height:16px;background:#fefee2;border-bottom:1px solid #888"></div>
<div class="cell" style="left:9px;width:114px;top:387.1px;color:#1a1a1a">10040004</div>
<div class="a" style="left:123px;top:384.1px;width:1px;height:16px;background:#8a8a8a"></div>
<div class="cell" style="left:127px;width:295px;top:387.1px;color:#1a1a1a">Kávécukor, tasakos (Korona, 10 db/csg)</div>
<div class="a" style="left:422px;top:384.1px;width:1px;height:16px;background:#8a8a8a"></div>
<div class="cell" style="left:423px;width:61px;text-align:right;top:387.1px;color:#1a1a1a">12,00</div>
<div class="a" style="left:486px;top:384.1px;width:1px;height:16px;background:#8a8a8a"></div>
<div class="cell" style="left:487px;width:61px;text-align:right;top:387.1px;color:#1a1a1a">15</div>
<div class="a" style="left:550px;top:384.1px;width:1px;height:16px;background:#8a8a8a"></div>
<div class="cell" style="left:551px;width:72px;text-align:right;top:387.1px;color:#1a1a1a">12,00</div>
<div class="a" style="left:625px;top:384.1px;width:1px;height:16px;background:#8a8a8a"></div>
<div class="cell" style="left:626px;width:45px;text-align:right;top:387.1px;color:#1a1a1a">27</div>
<div class="a" style="left:673px;top:384.1px;width:1px;height:16px;background:#8a8a8a"></div>
<div class="cell" style="left:677px;width:60px;top:387.1px;color:#1a1a1a">csg</div>
<div class="a" style="left:737px;top:384.1px;width:1px;height:16px;background:#8a8a8a"></div>
<div class="cell" style="left:741px;width:35px;top:387.1px;color:#1a1a1a">Irodai</div>
<div class="a" style="left:5px;top:400.2px;width:772px;height:16px;background:#ffffff;border-bottom:1px solid #888"></div>
<div class="cell" style="left:9px;width:114px;top:403.2px;color:#1a1a1a">10040002</div>
<div class="a" style="left:123px;top:400.2px;width:1px;height:16px;background:#8a8a8a"></div>
<div class="cell" style="left:127px;width:295px;top:403.2px;color:#1a1a1a">Kávéfőző Krups Nespresso U (fekete-ezüst)</div>
<div class="a" style="left:422px;top:400.2px;width:1px;height:16px;background:#8a8a8a"></div>
<div class="cell" style="left:423px;width:61px;text-align:right;top:403.2px;color:#1a1a1a">27 165,00</div>
<div class="a" style="left:486px;top:400.2px;width:1px;height:16px;background:#8a8a8a"></div>
<div class="cell" style="left:487px;width:61px;text-align:right;top:403.2px;color:#1a1a1a">34 500</div>
<div class="a" style="left:550px;top:400.2px;width:1px;height:16px;background:#8a8a8a"></div>
<div class="cell" style="left:551px;width:72px;text-align:right;top:403.2px;color:#1a1a1a">4,00</div>
<div class="a" style="left:625px;top:400.2px;width:1px;height:16px;background:#8a8a8a"></div>
<div class="cell" style="left:626px;width:45px;text-align:right;top:403.2px;color:#1a1a1a">27</div>
<div class="a" style="left:673px;top:400.2px;width:1px;height:16px;background:#8a8a8a"></div>
<div class="cell" style="left:677px;width:60px;top:403.2px;color:#1a1a1a">db</div>
<div class="a" style="left:737px;top:400.2px;width:1px;height:16px;background:#8a8a8a"></div>
<div class="cell" style="left:741px;width:35px;top:403.2px;color:#1a1a1a">Irodai</div>
<div class="a" style="left:5px;top:416.3px;width:772px;height:16px;background:#fefee2;border-bottom:1px solid #888"></div>
<div class="cell" style="left:9px;width:114px;top:419.3px;color:#1a1a1a">10040001</div>
<div class="a" style="left:123px;top:416.3px;width:1px;height:16px;background:#8a8a8a"></div>
<div class="cell" style="left:127px;width:295px;top:419.3px;color:#1a1a1a">Mikrohullámú sütő Samsung 2254</div>
<div class="a" style="left:422px;top:416.3px;width:1px;height:16px;background:#8a8a8a"></div>
<div class="cell" style="left:423px;width:61px;text-align:right;top:419.3px;color:#1a1a1a">15 740,00</div>
<div class="a" style="left:486px;top:416.3px;width:1px;height:16px;background:#8a8a8a"></div>
<div class="cell" style="left:487px;width:61px;text-align:right;top:419.3px;color:#1a1a1a">19 990</div>
<div class="a" style="left:550px;top:416.3px;width:1px;height:16px;background:#8a8a8a"></div>
<div class="cell" style="left:551px;width:72px;text-align:right;top:419.3px;color:#1a1a1a">3,00</div>
<div class="a" style="left:625px;top:416.3px;width:1px;height:16px;background:#8a8a8a"></div>
<div class="cell" style="left:626px;width:45px;text-align:right;top:419.3px;color:#1a1a1a">27</div>
<div class="a" style="left:673px;top:416.3px;width:1px;height:16px;background:#8a8a8a"></div>
<div class="cell" style="left:677px;width:60px;top:419.3px;color:#1a1a1a">db</div>
<div class="a" style="left:737px;top:416.3px;width:1px;height:16px;background:#8a8a8a"></div>
<div class="cell" style="left:741px;width:35px;top:419.3px;color:#1a1a1a">Irodai</div>
<div class="a" style="left:5px;top:432.4px;width:772px;height:16px;background:#ffffff;border-bottom:1px solid #888"></div>
<div class="cell" style="left:9px;width:114px;top:435.4px;color:#1a1a1a">10010006</div>
<div class="a" style="left:123px;top:432.4px;width:1px;height:16px;background:#8a8a8a"></div>
<div class="cell" style="left:127px;width:295px;top:435.4px;color:#1a1a1a">Négyzethálós füzet, A5 (44-28)</div>
<div class="a" style="left:422px;top:432.4px;width:1px;height:16px;background:#8a8a8a"></div>
<div class="cell" style="left:423px;width:61px;text-align:right;top:435.4px;color:#1a1a1a">20,00</div>
<div class="a" style="left:486px;top:432.4px;width:1px;height:16px;background:#8a8a8a"></div>
<div class="cell" style="left:487px;width:61px;text-align:right;top:435.4px;color:#1a1a1a">25</div>
<div class="a" style="left:550px;top:432.4px;width:1px;height:16px;background:#8a8a8a"></div>
<div class="cell" style="left:551px;width:72px;text-align:right;top:435.4px;color:#1a1a1a">1,00</div>
<div class="a" style="left:625px;top:432.4px;width:1px;height:16px;background:#8a8a8a"></div>
<div class="cell" style="left:626px;width:45px;text-align:right;top:435.4px;color:#1a1a1a">27</div>
<div class="a" style="left:673px;top:432.4px;width:1px;height:16px;background:#8a8a8a"></div>
<div class="cell" style="left:677px;width:60px;top:435.4px;color:#1a1a1a">db</div>
<div class="a" style="left:737px;top:432.4px;width:1px;height:16px;background:#8a8a8a"></div>
<div class="cell" style="left:741px;width:35px;top:435.4px;color:#1a1a1a">Papíráru</div>
<div class="a" style="left:5px;top:448.5px;width:772px;height:16px;background:#fefee2;border-bottom:1px solid #888"></div>
<div class="cell" style="left:9px;width:114px;top:451.5px;color:#1a1a1a">10020005</div>
<div class="a" style="left:123px;top:448.5px;width:1px;height:16px;background:#8a8a8a"></div>
<div class="cell" style="left:127px;width:295px;top:451.5px;color:#1a1a1a">Postairón, kék-piros, vastag (Blitz)</div>
<div class="a" style="left:422px;top:448.5px;width:1px;height:16px;background:#8a8a8a"></div>
<div class="cell" style="left:423px;width:61px;text-align:right;top:451.5px;color:#1a1a1a">43,00</div>
<div class="a" style="left:486px;top:448.5px;width:1px;height:16px;background:#8a8a8a"></div>
<div class="cell" style="left:487px;width:61px;text-align:right;top:451.5px;color:#1a1a1a">55</div>
<div class="a" style="left:550px;top:448.5px;width:1px;height:16px;background:#8a8a8a"></div>
<div class="cell" style="left:551px;width:72px;text-align:right;top:451.5px;color:#1a1a1a">10,00</div>
<div class="a" style="left:625px;top:448.5px;width:1px;height:16px;background:#8a8a8a"></div>
<div class="cell" style="left:626px;width:45px;text-align:right;top:451.5px;color:#1a1a1a">27</div>
<div class="a" style="left:673px;top:448.5px;width:1px;height:16px;background:#8a8a8a"></div>
<div class="cell" style="left:677px;width:60px;top:451.5px;color:#1a1a1a">db</div>
<div class="a" style="left:737px;top:448.5px;width:1px;height:16px;background:#8a8a8a"></div>
<div class="cell" style="left:741px;width:35px;top:451.5px;color:#1a1a1a">Írószere</div>
<div class="a" style="left:5px;top:464.6px;width:772px;height:16px;background:#ffffff;border-bottom:1px solid #888"></div>
<div class="cell" style="left:9px;width:114px;top:467.6px;color:#1a1a1a">10020008</div>
<div class="a" style="left:123px;top:464.6px;width:1px;height:16px;background:#8a8a8a"></div>
<div class="cell" style="left:127px;width:295px;top:467.6px;color:#1a1a1a">Szövegkiemelő, rózsaszín (Stabilo)</div>
<div class="a" style="left:422px;top:464.6px;width:1px;height:16px;background:#8a8a8a"></div>
<div class="cell" style="left:423px;width:61px;text-align:right;top:467.6px;color:#1a1a1a">87,00</div>
<div class="a" style="left:486px;top:464.6px;width:1px;height:16px;background:#8a8a8a"></div>
<div class="cell" style="left:487px;width:61px;text-align:right;top:467.6px;color:#1a1a1a">110</div>
<div class="a" style="left:550px;top:464.6px;width:1px;height:16px;background:#8a8a8a"></div>
<div class="cell" style="left:551px;width:72px;text-align:right;top:467.6px;color:#1a1a1a">10,00</div>
<div class="a" style="left:625px;top:464.6px;width:1px;height:16px;background:#8a8a8a"></div>
<div class="cell" style="left:626px;width:45px;text-align:right;top:467.6px;color:#1a1a1a">27</div>
<div class="a" style="left:673px;top:464.6px;width:1px;height:16px;background:#8a8a8a"></div>
<div class="cell" style="left:677px;width:60px;top:467.6px;color:#1a1a1a">db</div>
<div class="a" style="left:737px;top:464.6px;width:1px;height:16px;background:#8a8a8a"></div>
<div class="cell" style="left:741px;width:35px;top:467.6px;color:#1a1a1a">Írószere</div>
<div class="a" style="left:5px;top:480.7px;width:772px;height:16px;background:#fefee2;border-bottom:1px solid #888"></div>
<div class="cell" style="left:9px;width:114px;top:483.7px;color:#1a1a1a">10020006</div>
<div class="a" style="left:123px;top:480.7px;width:1px;height:16px;background:#8a8a8a"></div>
<div class="cell" style="left:127px;width:295px;top:483.7px;color:#1a1a1a">Szövegkiemelő, sárga (Stabilo)</div>
<div class="a" style="left:422px;top:480.7px;width:1px;height:16px;background:#8a8a8a"></div>
<div class="cell" style="left:423px;width:61px;text-align:right;top:483.7px;color:#1a1a1a">87,00</div>
<div class="a" style="left:486px;top:480.7px;width:1px;height:16px;background:#8a8a8a"></div>
<div class="cell" style="left:487px;width:61px;text-align:right;top:483.7px;color:#1a1a1a">110</div>
<div class="a" style="left:550px;top:480.7px;width:1px;height:16px;background:#8a8a8a"></div>
<div class="cell" style="left:551px;width:72px;text-align:right;top:483.7px;color:#1a1a1a">10,00</div>
<div class="a" style="left:625px;top:480.7px;width:1px;height:16px;background:#8a8a8a"></div>
<div class="cell" style="left:626px;width:45px;text-align:right;top:483.7px;color:#1a1a1a">27</div>
<div class="a" style="left:673px;top:480.7px;width:1px;height:16px;background:#8a8a8a"></div>
<div class="cell" style="left:677px;width:60px;top:483.7px;color:#1a1a1a">db</div>
<div class="a" style="left:737px;top:480.7px;width:1px;height:16px;background:#8a8a8a"></div>
<div class="cell" style="left:741px;width:35px;top:483.7px;color:#1a1a1a">Írószere</div>
<div class="a" style="left:5px;top:496.8px;width:772px;height:16px;background:#ffffff;border-bottom:1px solid #888"></div>
<div class="cell" style="left:9px;width:114px;top:499.8px;color:#1a1a1a">10020007</div>
<div class="a" style="left:123px;top:496.8px;width:1px;height:16px;background:#8a8a8a"></div>
<div class="cell" style="left:127px;width:295px;top:499.8px;color:#1a1a1a">Szövegkiemelő, zöld (Stabilo)</div>
<div class="a" style="left:422px;top:496.8px;width:1px;height:16px;background:#8a8a8a"></div>
<div class="cell" style="left:423px;width:61px;text-align:right;top:499.8px;color:#1a1a1a">87,00</div>
<div class="a" style="left:486px;top:496.8px;width:1px;height:16px;background:#8a8a8a"></div>
<div class="cell" style="left:487px;width:61px;text-align:right;top:499.8px;color:#1a1a1a">110</div>
<div class="a" style="left:550px;top:496.8px;width:1px;height:16px;background:#8a8a8a"></div>
<div class="cell" style="left:551px;width:72px;text-align:right;top:499.8px;color:#1a1a1a">10,00</div>
<div class="a" style="left:625px;top:496.8px;width:1px;height:16px;background:#8a8a8a"></div>
<div class="cell" style="left:626px;width:45px;text-align:right;top:499.8px;color:#1a1a1a">27</div>
<div class="a" style="left:673px;top:496.8px;width:1px;height:16px;background:#8a8a8a"></div>
<div class="cell" style="left:677px;width:60px;top:499.8px;color:#1a1a1a">db</div>
<div class="a" style="left:737px;top:496.8px;width:1px;height:16px;background:#8a8a8a"></div>
<div class="cell" style="left:741px;width:35px;top:499.8px;color:#1a1a1a">Írószere</div>
<div class="a" style="left:5px;top:512.9px;width:772px;height:16px;background:#fefee2;border-bottom:1px solid #888"></div>
<div class="cell" style="left:9px;width:114px;top:515.9px;color:#1a1a1a">10040006</div>
<div class="a" style="left:123px;top:512.9px;width:1px;height:16px;background:#8a8a8a"></div>
<div class="cell" style="left:127px;width:295px;top:515.9px;color:#1a1a1a">Tea, Twinings Earl Grey szálas, fémdobozban</div>
<div class="a" style="left:422px;top:512.9px;width:1px;height:16px;background:#8a8a8a"></div>
<div class="cell" style="left:423px;width:61px;text-align:right;top:515.9px;color:#1a1a1a">622,00</div>
<div class="a" style="left:486px;top:512.9px;width:1px;height:16px;background:#8a8a8a"></div>
<div class="cell" style="left:487px;width:61px;text-align:right;top:515.9px;color:#1a1a1a">790</div>
<div class="a" style="left:550px;top:512.9px;width:1px;height:16px;background:#8a8a8a"></div>
<div class="cell" style="left:551px;width:72px;text-align:right;top:515.9px;color:#1a1a1a">8,00</div>
<div class="a" style="left:625px;top:512.9px;width:1px;height:16px;background:#8a8a8a"></div>
<div class="cell" style="left:626px;width:45px;text-align:right;top:515.9px;color:#1a1a1a">27</div>
<div class="a" style="left:673px;top:512.9px;width:1px;height:16px;background:#8a8a8a"></div>
<div class="cell" style="left:677px;width:60px;top:515.9px;color:#1a1a1a">db</div>
<div class="a" style="left:737px;top:512.9px;width:1px;height:16px;background:#8a8a8a"></div>
<div class="cell" style="left:741px;width:35px;top:515.9px;color:#1a1a1a">Irodai</div>
<div class="a" style="left:5px;top:529.0px;width:772px;height:16px;background:#ffffff;border-bottom:1px solid #888"></div>
<div class="cell" style="left:9px;width:114px;top:532.0px;color:#1a1a1a">10010004</div>
<div class="a" style="left:123px;top:529.0px;width:1px;height:16px;background:#8a8a8a"></div>
<div class="cell" style="left:127px;width:295px;top:532.0px;color:#1a1a1a">Vonalas füzet, A5 (34-28)</div>
<div class="a" style="left:422px;top:529.0px;width:1px;height:16px;background:#8a8a8a"></div>
<div class="cell" style="left:423px;width:61px;text-align:right;top:532.0px;color:#1a1a1a">20,00</div>
<div class="a" style="left:486px;top:529.0px;width:1px;height:16px;background:#8a8a8a"></div>
<div class="cell" style="left:487px;width:61px;text-align:right;top:532.0px;color:#1a1a1a">25</div>
<div class="a" style="left:550px;top:529.0px;width:1px;height:16px;background:#8a8a8a"></div>
<div class="cell" style="left:551px;width:72px;text-align:right;top:532.0px;color:#1a1a1a">2,00</div>
<div class="a" style="left:625px;top:529.0px;width:1px;height:16px;background:#8a8a8a"></div>
<div class="cell" style="left:626px;width:45px;text-align:right;top:532.0px;color:#1a1a1a">27</div>
<div class="a" style="left:673px;top:529.0px;width:1px;height:16px;background:#8a8a8a"></div>
<div class="cell" style="left:677px;width:60px;top:532.0px;color:#1a1a1a">db</div>
<div class="a" style="left:737px;top:529.0px;width:1px;height:16px;background:#8a8a8a"></div>
<div class="cell" style="left:741px;width:35px;top:532.0px;color:#1a1a1a">Papíráru</div>
<div class="a" style="left:5px;top:545.1px;width:772px;height:16px;background:#fefee2;border-bottom:1px solid #888"></div>
<div class="cell" style="left:9px;width:114px;top:548.1px;color:#1a1a1a">10020011</div>
<div class="a" style="left:123px;top:545.1px;width:1px;height:16px;background:#8a8a8a"></div>
<div class="cell" style="left:127px;width:295px;top:548.1px;color:#1a1a1a">Zselés toll, prémium kék (Parker)</div>
<div class="a" style="left:422px;top:545.1px;width:1px;height:16px;background:#8a8a8a"></div>
<div class="cell" style="left:423px;width:61px;text-align:right;top:548.1px;color:#1a1a1a">1 969,00</div>
<div class="a" style="left:486px;top:545.1px;width:1px;height:16px;background:#8a8a8a"></div>
<div class="cell" style="left:487px;width:61px;text-align:right;top:548.1px;color:#1a1a1a">2 501</div>
<div class="a" style="left:550px;top:545.1px;width:1px;height:16px;background:#8a8a8a"></div>
<div class="cell" style="left:551px;width:72px;text-align:right;top:548.1px;color:#1a1a1a">20,00</div>
<div class="a" style="left:625px;top:545.1px;width:1px;height:16px;background:#8a8a8a"></div>
<div class="cell" style="left:626px;width:45px;text-align:right;top:548.1px;color:#1a1a1a">27</div>
<div class="a" style="left:673px;top:545.1px;width:1px;height:16px;background:#8a8a8a"></div>
<div class="cell" style="left:677px;width:60px;top:548.1px;color:#1a1a1a">db</div>
<div class="a" style="left:737px;top:545.1px;width:1px;height:16px;background:#8a8a8a"></div>
<div class="cell" style="left:741px;width:35px;top:548.1px;color:#1a1a1a">Írószere</div>
<div class="a" style="left:5px;top:652px;width:772px;height:1px;background:#fff"></div>
<svg class="ic" style="left:9px;top:657px" width="6" height="8" viewBox="0 0 6 8"><path d="M5 0.5 L1.5 4 L5 7.5" stroke="#505050" stroke-width="2" fill="none"/></svg>
<div class="a" style="left:21px;top:654px;width:16px;height:14px;background:#cdcdcd"></div>
<svg class="ic" style="left:765px;top:657px" width="6" height="8" viewBox="0 0 6 8"><path d="M1 0.5 L4.5 4 L1 7.5" stroke="#505050" stroke-width="2" fill="none"/></svg>
<div class="a" style="left:5px;top:669px;width:772px;height:1px;background:#fff"></div>
<div class="a" style="left:777px;top:175px;width:1px;height:497px;background:#fdfdfd"></div>
<div class="a" style="left:1290px;top:174px;width:1px;height:499px;background:#fcfcfc"></div>
<div class="a" style="left:783px;top:174px;width:508px;height:316px;background:#f0f0f0;border-left:1px solid #9c9c9c;border-top:1px solid #9c9c9c"></div>
<div class="a" style="left:784px;top:190px;width:117px;height:2px;background:#6a6a6a"></div>
<div class="hc cell" style="left:786px;width:116px;top:179px">Cikkszám</div>
<div class="a" style="left:902px;top:175px;width:1px;height:16px;background:#6e6e6e"></div>
<div class="a" style="left:904px;top:190px;width:296px;height:2px;background:#6a6a6a"></div>
<div class="hc cell" style="left:905px;width:295px;top:179px">Megnevezés 1.</div>
<div class="a" style="left:1200px;top:175px;width:1px;height:16px;background:#6e6e6e"></div>
<div class="a" style="left:1202px;top:190px;width:62px;height:2px;background:#6a6a6a"></div>
<div class="hc cell" style="left:1203px;width:61px;top:179px">1. ároszlop</div>
<div class="a" style="left:1264px;top:175px;width:1px;height:16px;background:#6e6e6e"></div>
<div class="a" style="left:1266px;top:190px;width:23px;height:2px;background:#6a6a6a"></div>
<div class="hc cell" style="left:1267px;width:22px;top:179px">1. ároszlop</div>
<svg class="ic" style="left:1190px;top:182px" width="8" height="8" viewBox="0 0 8 8"><path d="M2.5 0H5.5V4H8L4 8L0 4H2.5Z" fill="#8a8a8a"/></svg>
<div class="a" style="left:784px;top:192.0px;width:506px;height:16px;background:#fefee2;border-bottom:1px solid #888"></div>
<div class="cell" style="left:787px;width:115px;top:195.0px;color:#1a1a1a">10020004</div>
<div class="a" style="left:902px;top:192.0px;width:1px;height:16px;background:#8a8a8a"></div>
<div class="cell" style="left:906px;width:294px;top:195.0px;color:#1a1a1a">Golyóstoll, kék, cserélhető betét (Spoko 15BC)</div>
<div class="a" style="left:1200px;top:192.0px;width:1px;height:16px;background:#8a8a8a"></div>
<div class="cell" style="left:1201px;width:61px;text-align:right;top:195.0px;color:#1a1a1a">75,00</div>
<div class="a" style="left:1264px;top:192.0px;width:1px;height:16px;background:#8a8a8a"></div>
<div class="a" style="left:784px;top:208.1px;width:506px;height:16px;background:#ffffff;border-bottom:1px solid #888"></div>
<div class="cell" style="left:787px;width:115px;top:211.1px;color:#1a1a1a">10040003</div>
<div class="a" style="left:902px;top:208.1px;width:1px;height:16px;background:#8a8a8a"></div>
<div class="cell" style="left:906px;width:294px;top:211.1px;color:#1a1a1a">Kávé Davidoff szemes (25 dkg)</div>
<div class="a" style="left:1200px;top:208.1px;width:1px;height:16px;background:#8a8a8a"></div>
<div class="cell" style="left:1201px;width:61px;text-align:right;top:211.1px;color:#1a1a1a">780,00</div>
<div class="a" style="left:1264px;top:208.1px;width:1px;height:16px;background:#8a8a8a"></div>
<div class="a" style="left:784px;top:224.2px;width:506px;height:16px;background:#fefee2;border-bottom:1px solid #888"></div>
<div class="cell" style="left:787px;width:115px;top:227.2px;color:#1a1a1a">10040006</div>
<div class="a" style="left:902px;top:224.2px;width:1px;height:16px;background:#8a8a8a"></div>
<div class="cell" style="left:906px;width:294px;top:227.2px;color:#1a1a1a">Tea, Twinings Earl Grey szálas, fémdobozban</div>
<div class="a" style="left:1200px;top:224.2px;width:1px;height:16px;background:#8a8a8a"></div>
<div class="cell" style="left:1201px;width:61px;text-align:right;top:227.2px;color:#1a1a1a">622,00</div>
<div class="a" style="left:1264px;top:224.2px;width:1px;height:16px;background:#8a8a8a"></div>
<div class="a" style="left:784px;top:473px;width:506px;height:1px;background:#fff"></div>
<svg class="ic" style="left:788px;top:478px" width="6" height="8" viewBox="0 0 6 8"><path d="M5 0.5 L1.5 4 L5 7.5" stroke="#505050" stroke-width="2" fill="none"/></svg>
<div class="a" style="left:799px;top:474px;width:16px;height:14px;background:#cdcdcd"></div>
<svg class="ic" style="left:1281px;top:478px" width="6" height="8" viewBox="0 0 6 8"><path d="M1 0.5 L4.5 4 L1 7.5" stroke="#505050" stroke-width="2" fill="none"/></svg>
<div class="a" style="left:784px;top:490px;width:506px;height:1px;background:#fff"></div>
<div class="a" style="left:783px;top:496px;width:507px;height:177px;background:#f0f0f0;border-left:1px solid #9c9c9c;border-top:1px solid #9c9c9c"></div>
<div class="a" style="left:784px;top:511px;width:142px;height:2px;background:#6a6a6a"></div>
<div class="hc cell" style="left:787px;width:140px;top:500px">Készlet típus</div>
<div class="a" style="left:927px;top:497px;width:1px;height:16px;background:#6e6e6e"></div>
<div class="a" style="left:929px;top:511px;width:118px;height:2px;background:#6a6a6a"></div>
<div class="hc cell" style="left:931px;width:116px;top:500px">Raktár</div>
<div class="a" style="left:1047px;top:497px;width:1px;height:16px;background:#6e6e6e"></div>
<div class="a" style="left:1049px;top:511px;width:62px;height:2px;background:#6a6a6a"></div>
<div class="hc cell" style="left:1048px;width:61px;text-align:right;top:500px">Mennyiség</div>
<div class="a" style="left:1111px;top:497px;width:1px;height:16px;background:#6e6e6e"></div>
<div class="a" style="left:1113px;top:511px;width:29px;height:2px;background:#6a6a6a"></div>
<div class="hc cell" style="left:1115px;width:27px;top:500px">M.E.</div>
<div class="a" style="left:1142px;top:497px;width:1px;height:16px;background:#6e6e6e"></div>
<div class="a" style="left:1144px;top:511px;width:63px;height:2px;background:#6a6a6a"></div>
<div class="hc cell" style="left:1143px;width:62px;text-align:right;top:500px">Mennyiség</div>
<div class="a" style="left:1207px;top:497px;width:1px;height:16px;background:#6e6e6e"></div>
<div class="a" style="left:1209px;top:511px;width:81px;height:2px;background:#6a6a6a"></div>
<div class="hc cell" style="left:1211px;width:79px;top:500px">M.E. (extra)</div>
<svg class="ic" style="left:916px;top:503px" width="8" height="8" viewBox="0 0 8 8"><path d="M2.5 0H5.5V4H8L4 8L0 4H2.5Z" fill="#8a8a8a"/></svg>
<div class="a" style="left:784px;top:513.0px;width:507px;height:16px;background:#fefee2;border-bottom:1px solid #888"></div>
<div class="cell" style="left:787px;width:140px;top:516.0px;color:#1a1a1a">&lt;Bizományba kapott készlet&gt;</div>
<div class="a" style="left:927px;top:513.0px;width:1px;height:16px;background:#8a8a8a"></div>
<div class="a" style="left:1047px;top:513.0px;width:1px;height:16px;background:#8a8a8a"></div>
<div class="cell" style="left:1048px;width:61px;text-align:right;top:516.0px;color:#1a1a1a">5,00</div>
<div class="a" style="left:1111px;top:513.0px;width:1px;height:16px;background:#8a8a8a"></div>
<div class="cell" style="left:1115px;width:27px;top:516.0px;color:#1a1a1a">db</div>
<div class="a" style="left:1142px;top:513.0px;width:1px;height:16px;background:#8a8a8a"></div>
<div class="cell" style="left:1143px;width:62px;text-align:right;top:516.0px;color:#1a1a1a">5,00</div>
<div class="a" style="left:1207px;top:513.0px;width:1px;height:16px;background:#8a8a8a"></div>
<div class="cell" style="left:1211px;width:79px;top:516.0px;color:#1a1a1a">db</div>
<div class="a" style="left:784px;top:529.1px;width:507px;height:16px;background:#ffffff;border-bottom:1px solid #888"></div>
<div class="cell" style="left:787px;width:140px;top:532.1px;color:#1a1a1a">Normál készlet</div>
<div class="a" style="left:927px;top:529.1px;width:1px;height:16px;background:#8a8a8a"></div>
<div class="cell" style="left:931px;width:116px;top:532.1px;color:#1a1a1a">1-es raktár (székhely)</div>
<div class="a" style="left:1047px;top:529.1px;width:1px;height:16px;background:#8a8a8a"></div>
<div class="cell" style="left:1048px;width:61px;text-align:right;top:532.1px;color:#1a1a1a">5,00</div>
<div class="a" style="left:1111px;top:529.1px;width:1px;height:16px;background:#8a8a8a"></div>
<div class="cell" style="left:1115px;width:27px;top:532.1px;color:#1a1a1a">db</div>
<div class="a" style="left:1142px;top:529.1px;width:1px;height:16px;background:#8a8a8a"></div>
<div class="cell" style="left:1143px;width:62px;text-align:right;top:532.1px;color:#1a1a1a">5,00</div>
<div class="a" style="left:1207px;top:529.1px;width:1px;height:16px;background:#8a8a8a"></div>
<div class="cell" style="left:1211px;width:79px;top:532.1px;color:#1a1a1a">db</div>
<div class="a" style="left:784px;top:656px;width:507px;height:1px;background:#fff"></div>
<svg class="ic" style="left:789px;top:661px" width="6" height="8" viewBox="0 0 6 8"><path d="M5 0.5 L1.5 4 L5 7.5" stroke="#505050" stroke-width="2" fill="none"/></svg>
<div class="a" style="left:800px;top:658px;width:16px;height:14px;background:#cdcdcd"></div>
<svg class="ic" style="left:1279px;top:661px" width="6" height="8" viewBox="0 0 6 8"><path d="M1 0.5 L4.5 4 L1 7.5" stroke="#505050" stroke-width="2" fill="none"/></svg>
<div class="a" style="left:784px;top:673px;width:507px;height:1px;background:#fff"></div>
<div class="a" style="left:4px;top:672px;width:780px;height:14px;border-top:1px solid #a0a0a0;border-left:1px solid #a0a0a0"></div>
<div class="a" style="left:783px;top:174px;width:1px;height:499px;background:#a0a0a0"></div>
<div class="a" style="left:784px;top:673px;width:510px;height:1px;background:#fff"></div>
<div class="a" style="left:0px;top:685px;width:1294px;height:1px;background:#fafafa"></div>
<div class="a" style="left:1294px;top:672px;width:1px;height:18px;background:#fff"></div>
<div class="a" style="left:1290px;top:672px;width:4px;height:1px;background:#777"></div>
<div class="t" style="left:7px;top:675px;color:#222">Megjelenített sor=22 | Összes sor=22</div>
<div class="a" style="left:0;top:690px;width:1296px;height:1px;background:#fff"></div>
<div class="a" style="left:0;top:726px;width:1296px;height:2px;background:#9a8a6a"></div>
<div class="a" style="left:1295px;top:690px;width:1px;height:36px;background:#707070"></div>
<div class="t" style="left:0px;width:75px;text-align:center;top:713px;color:#222;font-size:11.5px">Új (F3)</div>
<div class="a" style="left:75px;top:692px;width:1px;height:34px;background:#a8a8a8"></div>
<div class="t" style="left:75px;width:78px;text-align:center;top:713px;color:#222;font-size:11.5px">Módosít (F5)</div>
<div class="a" style="left:153px;top:692px;width:1px;height:34px;background:#a8a8a8"></div>
<div class="t" style="left:153px;width:78px;text-align:center;top:713px;color:#222;font-size:11.5px">Töröl (F8)</div>
<div class="a" style="left:231px;top:692px;width:1px;height:34px;background:#a8a8a8"></div>
<div class="t" style="left:231px;width:77px;text-align:center;top:713px;color:#222;font-size:11.5px">Másol (F7)</div>
<div class="a" style="left:308px;top:692px;width:1px;height:34px;background:#a8a8a8"></div>
<div class="t" style="left:308px;width:77px;text-align:center;top:713px;color:#222;font-size:11.5px">Frissít (F4)</div>
<div class="a" style="left:385px;top:692px;width:1px;height:34px;background:#a8a8a8"></div>
<div class="t" style="left:385px;width:78px;text-align:center;top:713px;color:#222;font-size:11.5px">Kiválaszt</div>
<div class="a" style="left:463px;top:692px;width:1px;height:34px;background:#a8a8a8"></div>
<div class="t" style="left:468px;width:70px;text-align:center;top:713px;color:#222;font-size:11.5px">Listához ad</div>
<div class="a" style="left:555px;top:692px;width:1px;height:34px;background:#a8a8a8"></div>
<div class="t" style="left:555px;width:78px;text-align:center;top:713px;color:#222;font-size:11.5px">Csatolás</div>
<div class="a" style="left:633px;top:692px;width:1px;height:34px;background:#a8a8a8"></div>
<div class="t" style="left:633px;width:78px;text-align:center;top:713px;color:#222;font-size:11.5px">Bezár (Esc)</div>
<div class="a" style="left:711px;top:692px;width:1px;height:34px;background:#a8a8a8"></div>
<div class="a" style="left:560px;top:691px;width:70px;height:35px;border-right:1px solid #8a8a8a;background:#f2f2f2"></div>
<div class="t" style="left:560px;width:70px;text-align:center;top:713px;color:#222;font-size:11.5px">Csatolás</div>
<svg class="ic" style="left:0;top:690px" width="720" height="38" viewBox="0 690 720 38"><rect x="31.8" y="695.6" width="8.5" height="11.5" rx="2" fill="#fff" stroke="#5a4028" stroke-width="1.3"/><path d="M116.3 699 V697.6 Q116.3 695.6 114.3 695.6 H109.8 Q107.8 695.6 107.8 697.6 V705.1 Q107.8 707.1 109.8 707.1 H114.3 Q116.3 707.1 116.3 705.6" fill="#fdf6ea" stroke="#5a4028" stroke-width="1.3"/><path d="M109.6 698.2 H112.2 M109.6 699.8 H111.2 M109.6 701.4 H110.6" stroke="#a09080" stroke-width="0.9"/><path d="M112.4 705.2 L119.6 698" stroke="#8a5526" stroke-width="3.2" stroke-linecap="round"/><path d="M111.4 706.4 L112 704 L113.6 705.6 Z" fill="#3a2010"/><rect x="189.6" y="695.2" width="4" height="2.4" rx="0.6" fill="none" stroke="#6b3a10" stroke-width="1"/><rect x="187" y="697.1" width="9.2" height="1.8" fill="#6b3a10"/><rect x="187.9" y="699.5" width="7.4" height="8.2" rx="0.8" fill="#6b3a10"/><path d="M190.2 700.8 V706.4 M192.9 700.8 V706.4" stroke="#e8d0b0" stroke-width="1"/><rect x="266.7" y="695.4" width="7" height="9.8" rx="1.6" fill="#b89070" stroke="#6b3a10" stroke-width="1.1"/><rect x="264.3" y="697.5" width="7.5" height="9.7" rx="1.6" fill="#fdf6ea" stroke="#6b3a10" stroke-width="1.3"/><path d="M265.8 700.2 H270.4 M265.8 702.2 H270.4 M265.8 704.2 H270.4 M268 699 V706" stroke="#8a7262" stroke-width="0.8"/><path d="M346.4 696.3 A5.1 5.1 0 1 1 342.3 703.2" fill="none" stroke="#228a22" stroke-width="1.6"/><path d="M342.4 694.9 L347.6 696.6 L343 699.8 Z" fill="#1a7a1a"/><circle cx="425.1" cy="701.4" r="6.8" fill="#1a9a1a"/><path d="M421.6 701.5 L424 703.9 L428.8 699" fill="none" stroke="#fff" stroke-width="2"/><path d="M502.8 695.1 V707.8 M496 701.4 H509.6" stroke="#6b3a08" stroke-width="3.6"/><path d="M540.6 706.6 H547.8 L544.2 710.8 Z" fill="#000"/><g transform="rotate(-42 594.9 701.8)"><rect x="586.6" y="698.6" width="16.6" height="6.4" rx="3.2" fill="#9a6a34" stroke="#5e3812" stroke-width="1.1"/><path d="M589.4 701.9 H599.6" stroke="#f4dcb0" stroke-width="1.3" stroke-linecap="round"/><path d="M596 700.2 Q601 700.4 601 701.8" fill="none" stroke="#e8c898" stroke-width="0.9"/></g><path d="M667.6 697.1 L677.8 705.6 M677.8 697.1 L667.6 705.6" stroke="#f0960a" stroke-width="3.2" stroke-linecap="round"/></svg>
<div class="a" style="left:565px;top:674px;width:117px;height:17px;background:#ffffe1;border:1px solid #767676"></div>
<div class="t" style="left:568px;top:677px;color:#1a1a1a;letter-spacing:0">Képek, fájlok csatolása</div>
</body></html>
